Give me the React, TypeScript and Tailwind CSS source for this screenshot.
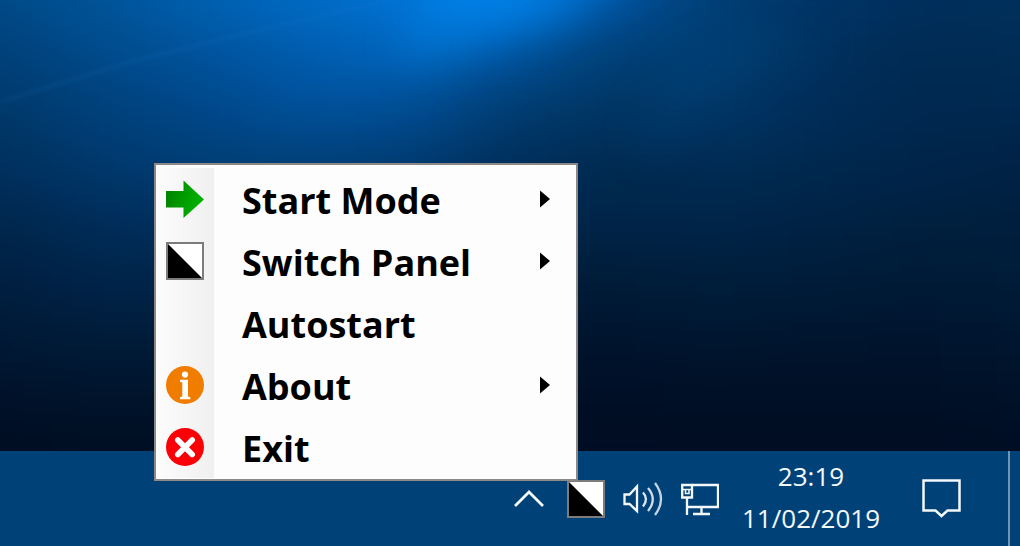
import type { ReactNode } from "react";

function SplitSquareIcon() {
  return (
    <svg className="block" width="38" height="38" viewBox="0 0 38 38" aria-hidden="true">
      <rect x="1" y="1" width="36" height="36" fill="#fff" />
      <path d="M2 2 L36 36 H2 Z" fill="#000" />
      <rect x="1" y="1" width="36" height="36" fill="none" stroke="#7c7c7c" strokeWidth="2" />
    </svg>
  );
}

function ArrowIcon() {
  return (
    <svg className="block" width="38" height="38" viewBox="0 0 38 38" aria-hidden="true">
      <defs>
        <linearGradient id="arrow-fill" x1="0" y1="0.3" x2="1" y2="0.6">
          <stop offset="0" stopColor="#008200" />
          <stop offset="0.6" stopColor="#00a300" />
          <stop offset="1" stopColor="#00b400" />
        </linearGradient>
      </defs>
      <path d="M0 11 H17.5 V0.5 L38 19.5 L17.5 38 V27.5 H0 Z" fill="url(#arrow-fill)" />
    </svg>
  );
}

function InfoIcon() {
  return (
    <svg className="block" width="38" height="38" viewBox="0 0 38 38" aria-hidden="true">
      <circle cx="19" cy="19" r="19" fill="#f07d00" />
      <circle cx="19" cy="8.6" r="3.1" fill="#fff" />
      <path d="M14 13.8 H22 V30.5 L24.3 31.2 V33.2 H14 V31.2 L16.3 30.5 V16.4 L14 15.8 Z" fill="#fff" />
    </svg>
  );
}

function CloseIcon() {
  return (
    <svg className="block" width="38" height="38" viewBox="0 0 38 38" aria-hidden="true">
      <circle cx="19" cy="19" r="19" fill="#fb0006" />
      <path d="M11.8 12 L26.2 26.4 M26.2 12 L11.8 26.4" stroke="#fff" strokeWidth="5.6" strokeLinecap="round" />
    </svg>
  );
}

type Entry = { label: string; icon?: ReactNode; submenu?: boolean };

const entries: Entry[] = [
  { label: "Start Mode", icon: <ArrowIcon />, submenu: true },
  { label: "Switch Panel", icon: <SplitSquareIcon />, submenu: true },
  { label: "Autostart" },
  { label: "About", icon: <InfoIcon />, submenu: true },
  { label: "Exit", icon: <CloseIcon /> },
];

function TrayMenu() {
  return (
    <div
      role="menu"
      className="absolute right-[442px] bottom-[65px] w-[424px] border-2 border-[#8b8885] bg-[#fdfdfd] pt-[3px] pb-px"
    >
      <div className="bg-[linear-gradient(to_right,#fcfcfc_0px,#f0f0f0_58px,#fdfdfd_58px)]">
        {entries.map((entry) => (
          <button
            key={entry.label}
            type="button"
            role="menuitem"
            aria-haspopup={entry.submenu ? "menu" : undefined}
            className="flex h-[62px] w-full items-center pr-[26px] pl-[10px] text-left text-[36px] leading-[48px] font-bold text-black"
          >
            <span className="mr-[38px] w-[38px]">{entry.icon}</span>
            <span className="flex-1 pt-1">{entry.label}</span>
            {entry.submenu && (
              <svg width="10" height="18" viewBox="0 0 10 18" aria-hidden="true">
                <path d="M0 0.5 L10 9 L0 17.5 Z" fill="#000" />
              </svg>
            )}
          </button>
        ))}
      </div>
    </div>
  );
}

// Colour mesh of the wallpaper: one row per 56 units down, one column per 102 units across.
const mesh = [
  "004a87 005498 0060b0 006ac4 0074d6 007ee6 0052a0 003f74 003468 002f5c 00305c",
  "003f78 004a8a 00529a 005cae 0064ba 00529c 003f74 003d70 00315e 002a52 002c54",
  "003868 00407a 004688 004f98 004c92 003b6e 003462 003666 002c58 002850 002850",
  "002f5c 00386c 003e74 003f76 003a70 002e5a 002a50 002c54 00284e 00244a 002244",
  "00264c 002c58 003060 003060 002b56 00264a 002448 002448 002244 00203e 001f3e",
  "001f40 00244a 002448 002244 002040 001c38 001c38 001e3c 001c3a 001a36 001c38",
  "001936 001c3a 001c3a 001a36 001830 00142c 00142e 001630 00152e 00142e 001630",
  "00122a 00142c 00142c 001228 001026 000f24 000f26 001026 001026 001026 001228",
  "000d22 000e22 000e22 000d20 000c20 000c20 000c22 000c22 000c22 000c22 000d24",
].map((row) => row.split(" "));

function Wallpaper() {
  return (
    <svg
      className="absolute inset-0 h-full w-full"
      viewBox="0 0 1020 451"
      preserveAspectRatio="none"
      aria-hidden="true"
    >
      <defs>
        <filter id="soften" filterUnits="userSpaceOnUse" x="-200" y="-200" width="1420" height="851" colorInterpolationFilters="sRGB">
          <feGaussianBlur stdDeviation="42 24" />
        </filter>
        <filter id="beam-soften" filterUnits="userSpaceOnUse" x="-200" y="-300" width="1420" height="851" colorInterpolationFilters="sRGB">
          <feGaussianBlur stdDeviation="20" />
        </filter>
        <filter id="streak-soften" filterUnits="userSpaceOnUse" x="-50" y="-50" width="1120" height="551" colorInterpolationFilters="sRGB">
          <feGaussianBlur stdDeviation="2" />
        </filter>
      </defs>
      <g filter="url(#soften)">
        {mesh.map((row, r) =>
          row.map((color, c) => {
            const left = c === 0 ? -200 : c * 102 - 51;
            const right = c === row.length - 1 ? 1220 : c * 102 + 52;
            const top = r === 0 ? -200 : r * 56 - 28;
            const bottom = r === mesh.length - 1 ? 651 : r * 56 + 29;
            return (
              <rect key={`${r}-${c}`} x={left} y={top} width={right - left} height={bottom - top} fill={`#${color}`} />
            );
          }),
        )}
      </g>
      <path d="M450 -80 L730 -80 L560 16 L460 52 L400 60 Z" fill="#0088f0" fillOpacity="0.42" filter="url(#beam-soften)" />
      <path d="M648 165 Q632 90 700 55 T820 40 Q760 70 720 90 T648 165 Z" fill="#004680" fillOpacity="0.3" filter="url(#beam-soften)" />
      <path d="M0 102 L130 62 L260 30 L400 -2" fill="none" stroke="#2b86d4" strokeOpacity="0.15" strokeWidth="3" filter="url(#streak-soften)" />
    </svg>
  );
}

function VolumeIcon() {
  return (
    <svg className="block" width="40" height="38" viewBox="0 0 40 38" fill="none" stroke="#f4f8fb" strokeWidth="2.3" aria-hidden="true">
      <path d="M1.5 14.5 H6.5 L14 6.5 V31 L6.5 24 H1.5 Z" />
      <path d="M20 12.5 Q26 19 20 26.5" strokeOpacity="0.9" />
      <path d="M25 8 Q34.5 19 25 31" strokeOpacity="0.85" />
      <path d="M32 3 Q44 19 32 35" strokeOpacity="0.8" />
    </svg>
  );
}

function NetworkIcon() {
  return (
    <svg className="block" width="38" height="38" viewBox="0 0 38 38" fill="none" stroke="#f4f8fb" strokeWidth="2.3" aria-hidden="true">
      <path d="M11 5 H37 V27 H6" />
      <path d="M1.2 5 H11 V17.5 H1.2 Z" />
      <path d="M2 9.5 H10.5 M4.5 9.5 V13.5 H8 V9.5" strokeWidth="1.5" />
      <path d="M6 17.5 V35" />
      <path d="M20.5 27 V34 M12 34 H29" />
    </svg>
  );
}

function Taskbar() {
  return (
    <footer className="relative flex h-[95px] items-center justify-end bg-[#004278] text-[#f4f8fb]">
      <button type="button" aria-label="Show hidden icons" className="mr-[23px]">
        <svg className="block" width="30" height="18" viewBox="0 0 30 18" fill="none" stroke="#f4f8fb" strokeWidth="2.8" aria-hidden="true">
          <path d="M1 16 L15 2 L29 16" />
        </svg>
      </button>
      <button type="button" aria-label="Switch Panel" className="mr-[18px]">
        <SplitSquareIcon />
      </button>
      <button type="button" aria-label="Volume" className="mr-[18px]">
        <VolumeIcon />
      </button>
      <button type="button" aria-label="Network" className="mr-[18px]">
        <NetworkIcon />
      </button>
      <button type="button" className="w-[148px] pb-1 text-center text-[26px] leading-[42px]">
        <time className="block">23:19</time>
        <time className="block">11/02/2019</time>
      </button>
      <button type="button" aria-label="Notifications" className="mr-[47px] ml-[37px]">
        <svg className="block" width="39" height="39" viewBox="0 0 39 39" fill="none" stroke="#f4f8fb" strokeWidth="2.5" aria-hidden="true">
          <path d="M1.5 1.5 H37.5 V31.5 H25.5 L19.5 37 L13.5 31.5 H1.5 Z" />
        </svg>
      </button>
      <button type="button" aria-label="Show desktop" className="w-[12px] self-stretch border-l-2 border-[#6f95b4]" />
    </footer>
  );
}

export default function App() {
  return (
    <div className="relative flex min-h-screen flex-col overflow-hidden bg-[#000c20] font-['Open_Sans','Noto_Sans',sans-serif]">
      <main className="relative flex-1">
        <Wallpaper />
      </main>
      <Taskbar />
      <TrayMenu />
    </div>
  );
}
